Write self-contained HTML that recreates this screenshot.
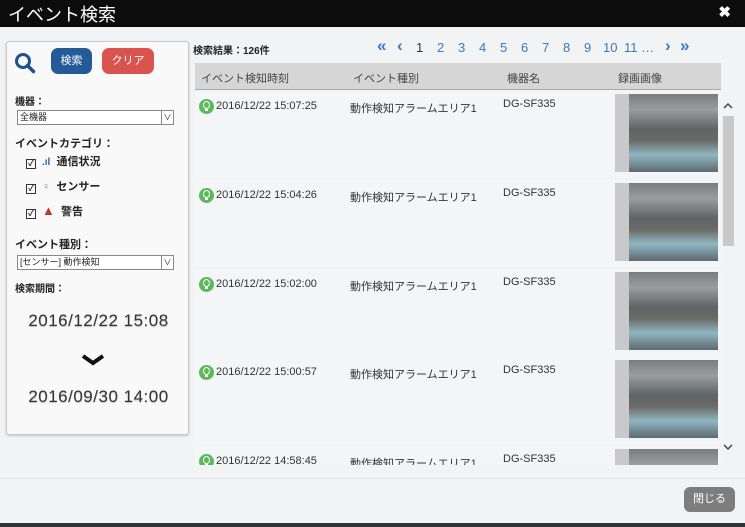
<!DOCTYPE html>
<html><head><meta charset="utf-8"><style>
*{box-sizing:border-box;margin:0;padding:0}
body{width:745px;height:527px;overflow:hidden;background:#333;font-family:"Liberation Sans","Noto Sans CJK JP",sans-serif;position:relative;color:#222}
.modal{position:absolute;left:0;top:0;width:745px;height:523px;background:#f2f3f4}
.title{position:absolute;left:0;top:0;width:745px;height:27px;background:#0c0c0c;color:#fff;font-size:18px;padding:1px 0 0 8px}
.x{position:absolute;right:14px;top:3px;color:#fff;font-size:15px;font-weight:bold}
.left{position:absolute;left:6px;top:41px;width:183px;height:394px;background:#f9f9f9;border:1px solid #c8c8c8;border-radius:3px;box-shadow:0 1px 2px rgba(0,0,0,.2)}
.a{position:absolute;font-size:11px}
.btn{position:absolute;color:#fff;font-size:11px;text-align:center;border-radius:7px;line-height:26px;height:26px}
.sel{position:absolute;left:10px;width:157px;height:15px;border:1px solid #888;background:#fff;font-size:9px;line-height:13px;padding-left:2px}
.sel i{position:absolute;right:0;top:0;width:12px;height:13px;border-left:1px solid #888;font-style:normal;text-align:center;font-size:8px}
.big{position:absolute;left:0;width:183px;text-align:center;font-family:"Liberation Sans Narrow","Liberation Sans",sans-serif;font-size:17px;color:#333;text-shadow:0 1px 1px #bbb;letter-spacing:.5px}
.hdr{position:absolute;left:195px;top:63px;width:526px;height:27px;background:#d6d6d6;border-bottom:1px solid #aaa;font-size:11px;color:#444}
.hdr span,.row span{position:absolute}
.row{position:absolute;left:195px;width:526px;height:87px;background:#f4f5f6;font-size:11px;color:#333}
.ic{display:inline-block;width:15px;height:15px;border-radius:50%;background:#5cb85c;position:absolute;left:4px;top:8px}
.ic:after{content:"";position:absolute;left:4px;top:2px;width:5px;height:6px;border:1.5px solid #fff;border-radius:50%}
.ic:before{content:"";position:absolute;left:6px;top:10px;width:3px;height:2px;background:#fff}
.th{position:absolute;left:420px;top:3px;width:103px;height:78px;background:linear-gradient(180deg,#7a7c7e 0%,#9a9c9e 20%,#5f6466 45%,#6b6b66 60%,#8fb6c2 78%,#5d6b70 100%)}
.th:before{content:"";position:absolute;left:0;top:0;width:14px;height:100%;background:#c9c9c9}
.pg{position:absolute;top:40px;font-size:13px;color:#3a7abf}
.cb{display:inline-block;width:10px;height:10px;border:1.5px solid #333;font-size:8px;line-height:7px;text-align:center;vertical-align:-1px;margin-right:6px}
</style></head><body>
<div class="modal">
<div class="title">イベント検索<span class="x">✖</span></div>
<div class="left">
 <svg style="position:absolute;left:7px;top:10px" width="22" height="22" viewBox="0 0 22 22"><circle cx="9" cy="9" r="6.5" fill="none" stroke="#1f4f8c" stroke-width="3"/><line x1="13.5" y1="13.5" x2="19.5" y2="19.5" stroke="#1f4f8c" stroke-width="3.5" stroke-linecap="round"/></svg>
 <div class="btn" style="left:44px;top:6px;width:41px;background:#235a97">検索</div>
 <div class="btn" style="left:95px;top:6px;width:52px;background:#d9534f">クリア</div>
 <div class="a" style="left:8px;top:51px;font-weight:bold;font-size:10px">機器：</div>
 <div class="sel" style="top:68px">全機器<i>∨</i></div>
 <div class="a" style="left:8px;top:93px;font-weight:bold;font-size:11px">イベントカテゴリ：</div>
 <div class="a" style="left:19px;top:111px;font-size:11px;font-weight:bold"><span class="cb">✓</span><span style="color:#2a62a8;font-size:10px">.ıl</span>&nbsp; 通信状況</div>
 <div class="a" style="left:19px;top:136px;font-size:11px;font-weight:bold"><span class="cb">✓</span><span style="color:#5cb85c">♀</span>&nbsp; センサー</div>
 <div class="a" style="left:19px;top:161px;font-size:11px;font-weight:bold"><span class="cb">✓</span><span style="color:#c9302c;font-size:13px">▲</span>&nbsp; 警告</div>
 <div class="a" style="left:8px;top:194px;font-weight:bold;font-size:11px">イベント種別：</div>
 <div class="sel" style="top:213px">[センサー] 動作検知<i>∨</i></div>
 <div class="a" style="left:8px;top:238px;font-weight:bold;font-size:10px">検索期間：</div>
 <div class="big" style="top:269px">2016/12/22 15:08</div>
 <svg style="position:absolute;left:74px;top:312px" width="24" height="12" viewBox="0 0 24 12"><path d="M2 2 L12 9 L22 2" fill="none" stroke="#111" stroke-width="4"/></svg>
 <div class="big" style="top:345px">2016/09/30 14:00</div>
</div>
<div class="a" style="left:193px;top:42px;font-weight:bold;font-size:10px">検索結果：126件</div>
<div class="pg" style="left:377px;font-weight:bold;font-size:17px;top:36px">«</div><div class="pg" style="left:397px;font-weight:bold;font-size:17px;top:36px">‹</div>
<div class="pg" style="left:416px;color:#333">1</div>
<div class="pg" style="left:437px">2</div><div class="pg" style="left:458px">3</div><div class="pg" style="left:479px">4</div><div class="pg" style="left:500px">5</div><div class="pg" style="left:521px">6</div><div class="pg" style="left:542px">7</div><div class="pg" style="left:563px">8</div><div class="pg" style="left:584px">9</div><div class="pg" style="left:603px">10</div><div class="pg" style="left:624px">11 …</div><div class="pg" style="left:665px;font-weight:bold;font-size:17px;top:36px">›</div><div class="pg" style="left:680px;font-weight:bold;font-size:17px;top:36px">»</div>
<div class="hdr"><span style="left:6px;top:7px">イベント検知時刻</span><span style="left:158px;top:7px">イベント種別</span><span style="left:312px;top:7px">機器名</span><span style="left:423px;top:7px">録画画像</span></div>
<div style="position:absolute;left:195px;top:91px;width:540px;height:374px;overflow:hidden">
<div class="row" style="left:0;top:0"><i class="ic"></i><span style="left:21px;top:9px">2016/12/22 15:07:25</span><span style="left:155px;top:9px">動作検知アラームエリア1</span><span style="left:308px;top:7px">DG-SF335</span><div class="th"></div></div>
<div class="row" style="left:0;top:89px"><i class="ic"></i><span style="left:21px;top:9px">2016/12/22 15:04:26</span><span style="left:155px;top:9px">動作検知アラームエリア1</span><span style="left:308px;top:7px">DG-SF335</span><div class="th"></div></div>
<div class="row" style="left:0;top:178px"><i class="ic"></i><span style="left:21px;top:9px">2016/12/22 15:02:00</span><span style="left:155px;top:9px">動作検知アラームエリア1</span><span style="left:308px;top:7px">DG-SF335</span><div class="th"></div></div>
<div class="row" style="left:0;top:266px"><i class="ic"></i><span style="left:21px;top:9px">2016/12/22 15:00:57</span><span style="left:155px;top:9px">動作検知アラームエリア1</span><span style="left:308px;top:7px">DG-SF335</span><div class="th"></div></div>
<div class="row" style="left:0;top:355px"><i class="ic"></i><span style="left:21px;top:9px">2016/12/22 14:58:45</span><span style="left:155px;top:9px">動作検知アラームエリア1</span><span style="left:308px;top:7px">DG-SF335</span><div class="th"></div></div>
<svg style="position:absolute;left:528px;top:11px" width="10" height="7" viewBox="0 0 10 7"><path d="M1 6 L5 2 L9 6" fill="none" stroke="#444" stroke-width="1.5"/></svg>
<div style="position:absolute;left:528px;top:25px;width:11px;height:130px;background:#c8c8c8"></div>
<svg style="position:absolute;left:528px;top:353px" width="10" height="7" viewBox="0 0 10 7"><path d="M1 1 L5 5 L9 1" fill="none" stroke="#444" stroke-width="1.5"/></svg>
</div>
<div style="position:absolute;left:0;top:478px;width:745px;height:1px;background:#e2e2e2"></div>
<div class="btn" style="left:684px;top:487px;width:51px;height:25px;line-height:25px;background:#7d7d7d;border-radius:6px;font-size:11px">閉じる</div>
</div>
</body></html>
